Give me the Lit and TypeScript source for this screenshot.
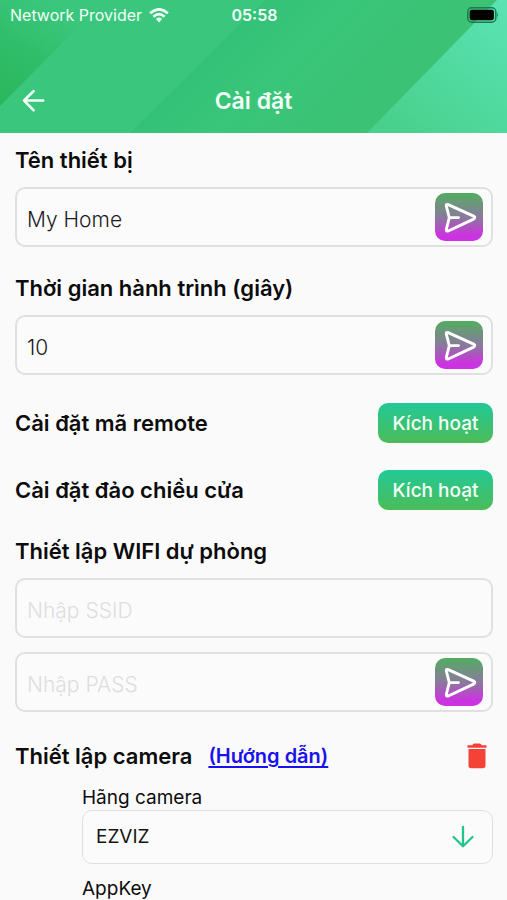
import { LitElement, html, css, svg, nothing } from "lit";
import { customElement, property } from "lit/decorators.js";

@customElement("send-field")
class SendField extends LitElement {
  @property() label = "";
  @property() value = "";
  @property() placeholder = "";
  @property({ type: Boolean }) sendable = false;

  static styles = css`
    :host { display: block; }
    .box {
      display: flex;
      align-items: center;
      height: 60px;
      box-sizing: border-box;
      padding: 0 8px 0 10px;
      border: 2px solid #e0e0e1;
      border-radius: 10px;
      background: #fbfbfb;
    }
    .input {
      flex: 1;
      min-width: 0;
      height: 100%;
      padding: 4px 0 0;
      border: 0;
      outline: 0;
      background: none;
      color: #1c1c1e;
      font: 300 21px "Inter", sans-serif;
    }
    .input::placeholder { color: #dedede; opacity: 1; }
    .send {
      width: 48px;
      height: 48px;
      padding: 0;
      border: 0;
      border-radius: 10px;
      background: linear-gradient(#52ad60, #8a7a9c 50%, #cc33e0 88%);
    }
    .icon { display: block; }
  `;

  render() {
    return html`<div class="box">
      <input class="input" type="text" aria-label=${this.label} .value=${this.value} placeholder=${this.placeholder} />
      ${this.sendable
        ? html`<button class="send" type="button" aria-label="Gửi">
            <svg class="icon" width="48" height="48" viewBox="0 0 48 48" fill="none" stroke="#fff" stroke-width="2.9" stroke-linecap="round" stroke-linejoin="round">
              <path d="M14.3 24.6H23.5M11.3 13Q11 10.7 13.2 11.6L38.6 23.1Q41 24.6 38.6 26.1L13.2 38Q11 38.5 11.3 36.5L14.3 24.6Z" />
            </svg>
          </button>`
        : nothing}
    </div>`;
  }
}

@customElement("app-root")
class AppRoot extends LitElement {
  static styles = css`
    :host {
      display: block;
      min-height: 100vh;
      background: #fafafa;
      color: #0c0c0c;
      font-family: "Inter", sans-serif;
    }
    .header {
      position: relative;
      height: 133px;
      overflow: hidden;
      background: #3ac77d;
      color: #f2fff7;
    }
    .backdrop { position: absolute; inset: 0; width: 100%; height: 100%; }
    .status, .nav {
      position: relative;
      display: grid;
      grid-template-columns: 1fr auto 1fr;
      align-items: center;
    }
    .status { height: 30px; padding: 0 8px 0 10px; font-size: 16px; }
    .carrier { display: flex; align-items: center; gap: 7px; white-space: nowrap; }
    .time { font-weight: 600; }
    .battery { justify-self: end; }
    .nav { height: 44px; margin-top: 49px; padding: 0 20px; }
    .back { width: 28px; height: 28px; padding: 0; border: 0; background: none; color: inherit; }
    .title { margin: 0; font-size: 23px; line-height: 28px; font-weight: 600; }
    .main { padding: 14px 14px 0 15px; }
    .heading { margin: 0; font-size: 22px; line-height: 26px; font-weight: 600; }
    .section { display: flex; flex-direction: column; gap: 14px; margin-bottom: 28px; }
    .rows { display: flex; flex-direction: column; gap: 27px; margin-bottom: 28px; }
    .row { display: flex; align-items: center; justify-content: space-between; }
    .activate {
      width: 115px;
      height: 40px;
      padding: 0;
      border: 0;
      border-radius: 10px;
      background: linear-gradient(#22c997, #4cbc58);
      color: #f4fff8;
      font: 500 19px "Inter", sans-serif;
    }
    .wifi { margin-bottom: 26px; }
    .camera { display: flex; align-items: center; gap: 16px; height: 36px; }
    .guide {
      color: #1a12ee;
      font-size: 20px;
      font-weight: 600;
      text-underline-offset: 3px;
    }
    .delete { width: 32px; height: 36px; margin-left: auto; padding: 0; border: 0; background: none; }
    .icon { display: block; }
    .details { margin: 12px 0 0 67px; }
    .label { display: block; font-size: 19px; line-height: 24px; }
    .picker { position: relative; margin-bottom: 13px; }
    .select {
      display: block;
      width: 100%;
      height: 54px;
      box-sizing: border-box;
      padding: 0 48px 2px 13px;
      appearance: none;
      border: 1px solid #e0e0e1;
      border-radius: 10px;
      background: #fbfbfb;
      color: #161616;
      font: 400 19px "Inter", sans-serif;
    }
    .arrow { position: absolute; top: 15px; right: 18px; pointer-events: none; }
    .camera-section { height: 162px; }
  `;

  private backdrop() {
    return svg`<svg class="backdrop" viewBox="0 0 507 133" preserveAspectRatio="none" aria-hidden="true">
      <defs>
        <linearGradient id="corner" gradientUnits="userSpaceOnUse" x1="0" y1="106" x2="60" y2="10">
          <stop offset="0" stop-color="#2ab65a" /><stop offset=".5" stop-color="#30bd69" /><stop offset="1" stop-color="#3ac77d" />
        </linearGradient>
        <linearGradient id="middle" gradientUnits="userSpaceOnUse" x1="200" y1="65" x2="300" y2="165">
          <stop offset="0" stop-color="#33c178" /><stop offset=".4" stop-color="#39c67a" /><stop offset="1" stop-color="#3bc274" />
        </linearGradient>
        <linearGradient id="light" gradientUnits="userSpaceOnUse" x1="400" y1="133" x2="507" y2="0">
          <stop offset="0" stop-color="#48d18c" /><stop offset="1" stop-color="#5be3b5" />
        </linearGradient>
      </defs>
      <path fill="url(#corner)" d="M0 0H105L0 106Z" />
      <path fill="url(#middle)" d="M265 0H497L367 133H130Z" />
      <path fill="url(#light)" d="M497 0H507V133H367Z" />
    </svg>`;
  }

  private activateRow(text: string) {
    return html`<div class="row">
      <h2 class="heading">${text}</h2>
      <button class="activate" type="button">Kích hoạt</button>
    </div>`;
  }

  render() {
    return html`
      <header class="header">
        ${this.backdrop()}
        <div class="status">
          <span class="carrier">Network Provider
            <svg width="20" height="15" viewBox="0 0 20 15" fill="none" stroke="#f2fff7" stroke-width="2.6" aria-hidden="true">
              <path d="M1.1 5.2Q10-2.6 18.9 5.2M4.4 8.7Q10 3.6 15.6 8.7" />
              <path d="M6.9 11Q10 8.2 13.1 11L10 14.4Z" fill="#f2fff7" stroke="none" />
            </svg>
          </span>
          <span class="time">05:58</span>
          <svg class="battery" width="32" height="16" viewBox="0 0 32 16" aria-hidden="true">
            <rect x=".8" y=".8" width="28" height="14.4" rx="4" fill="none" stroke="#1c7950" stroke-width="1.5" />
            <rect x="2.7" y="2.8" width="24.2" height="10.4" rx="2.2" fill="#000" />
            <path d="M30.2 5.5Q32 8 30.2 10.5Z" fill="#1c7950" />
          </svg>
        </div>
        <div class="nav">
          <button class="back" type="button" aria-label="Quay lại">
            <svg class="icon" width="28" height="28" viewBox="0 0 28 28" fill="none" stroke="currentColor" stroke-width="2.5" stroke-linecap="round" stroke-linejoin="round">
              <path d="M23.3 13.5H4M13.7 4L4 13.5L13.7 23.3" />
            </svg>
          </button>
          <h1 class="title">Cài đặt</h1>
        </div>
      </header>
      <main class="main">
        <section class="section">
          <h2 class="heading">Tên thiết bị</h2>
          <send-field label="Tên thiết bị" value="My Home" sendable></send-field>
        </section>
        <section class="section">
          <h2 class="heading">Thời gian hành trình (giây)</h2>
          <send-field label="Thời gian hành trình (giây)" value="10" sendable></send-field>
        </section>
        <div class="rows">
          ${this.activateRow("Cài đặt mã remote")}
          ${this.activateRow("Cài đặt đảo chiều cửa")}
        </div>
        <section class="section wifi">
          <h2 class="heading">Thiết lập WIFI dự phòng</h2>
          <send-field label="SSID" placeholder="Nhập SSID"></send-field>
          <send-field label="PASS" placeholder="Nhập PASS" sendable></send-field>
        </section>
        <section class="camera-section">
          <div class="camera">
            <h2 class="heading">Thiết lập camera</h2>
            <a class="guide" href="#">(Hướng dẫn)</a>
            <button class="delete" type="button" aria-label="Xóa">
              <svg class="icon" width="32" height="36" viewBox="0 0 32 36" fill="#f44336">
                <path d="M6.5 7.2H11.2Q12 5.6 13.5 5.6H18.5Q20 5.6 20.8 7.2H25.5V9.7H6.5Z" />
                <path d="M7.5 11H24.5V27.5Q24.5 30.2 21.8 30.2H10.2Q7.5 30.2 7.5 27.5Z" />
              </svg>
            </button>
          </div>
          <div class="details">
            <label class="label" for="brand">Hãng camera</label>
            <div class="picker">
              <select class="select" id="brand"><option>EZVIZ</option></select>
              <svg class="arrow" width="24" height="24" viewBox="0 0 24 24" fill="none" stroke="#20c58c" stroke-width="2.3" stroke-linecap="round" stroke-linejoin="round" aria-hidden="true">
                <path d="M12 2V21.3M2.5 12L12 21.3L21.5 12" />
              </svg>
            </div>
            <span class="label">AppKey</span>
          </div>
        </section>
      </main>
    `;
  }
}
